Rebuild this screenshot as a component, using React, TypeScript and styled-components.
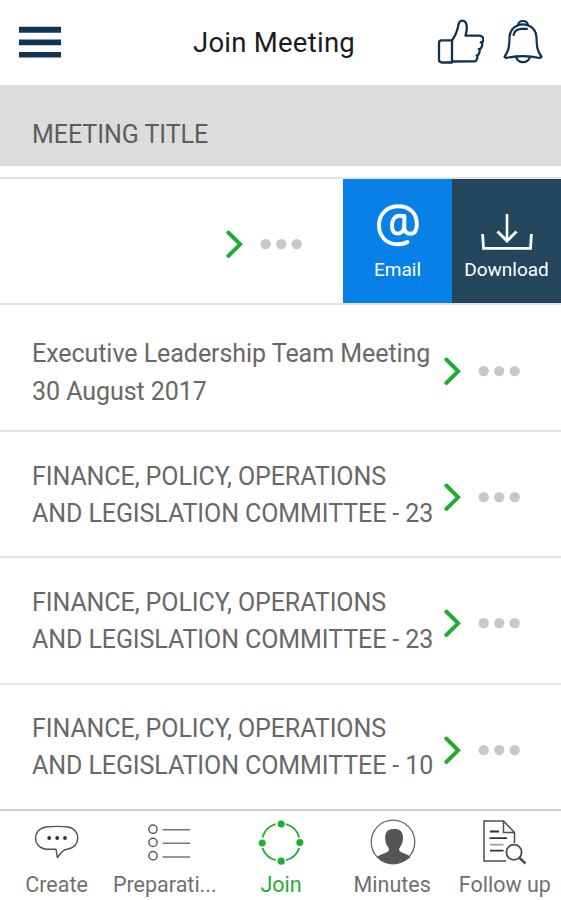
import React from "react";
import styled, { createGlobalStyle } from "styled-components";

const Global = createGlobalStyle`
  * { box-sizing: border-box; }
  html, body { margin: 0; padding: 0; background: #fff; }
  body { font-family: Roboto, "Liberation Sans", sans-serif; overflow: hidden; }
  svg { display: block; flex: none; }
`;

const Screen = styled.main`
  width: 561px;
  height: 900px;
  display: flex;
  flex-direction: column;
  background: #fff;
  overflow: hidden;
`;

const Header = styled.header`
  height: 85px;
  flex: none;
  display: grid;
  grid-template-columns: 117px 1fr 131px;
  align-items: center;
  padding: 0 18px 2px 19px;
`;

const Title = styled.h1`
  margin: 0;
  text-align: center;
  font-size: 27.5px;
  line-height: 32px;
  font-weight: 400;
  letter-spacing: 0.25px;
  color: #1c1c1c;
  padding-top: 3px;
  white-space: nowrap;
`;

const HeaderActions = styled.div`
  display: flex;
  justify-content: flex-end;
  gap: 19px;
`;

const IconButton = styled.button`
  border: 0;
  padding: 0;
  background: none;
  color: #12304f;
`;

const SectionBar = styled.div`
  height: 81px;
  flex: none;
  display: flex;
  align-items: center;
  padding: 17px 32px 0;
  background: #dcdcdc;
  color: #5c5c5c;
  font-size: 25px;
  letter-spacing: -0.05px;
`;

const List = styled.ul`
  list-style: none;
  margin: 11px 0 0;
  padding: 0;
  height: 632px;
  flex: none;
  display: grid;
  grid-template-rows: repeat(5, 1fr);
`;

const Row = styled.li<{ $swiped?: boolean }>`
  display: flex;
  align-items: stretch;
  border-top: 2px solid #e3e3e3;
  padding-left: ${(p) => (p.$swiped ? 226 : 32)}px;
`;

const RowText = styled.div<{ $drop: number; $spacing: number }>`
  width: 412px;
  padding-top: ${(p) => p.$drop}px;
  font-size: 25px;
  line-height: 37.2px;
  font-weight: 400;
  letter-spacing: ${(p) => p.$spacing}px;
  color: #686868;
  white-space: nowrap;
`;

const RowControls = styled.div`
  display: flex;
  align-items: center;
  gap: 15.500px;
  padding-top: 6px;
`;

const SwipeActions = styled.div`
  display: flex;
  margin-left: auto;
`;

const SwipeButton = styled.button<{ $bg: string }>`
  width: 109px;
  border: 0;
  padding: 22px 0 0;
  display: flex;
  flex-direction: column;
  align-items: center;
  gap: 5px;
  background: ${(p) => p.$bg};
  color: #fff;
  font-family: inherit;
  font-size: 19px;
  line-height: 24px;
`;

const TabBar = styled.nav`
  flex: 1;
  display: grid;
  grid-template-columns: repeat(5, 1fr);
  border-top: 2px solid #cfcfcf;
`;

const Tab = styled.button<{ $active?: boolean }>`
  border: 0;
  padding: 6px 0 0 1px;
  background: none;
  display: flex;
  flex-direction: column;
  align-items: center;
  gap: 5px;
  min-width: 0;
  font-family: inherit;
  font-size: 21.5px;
  line-height: 26px;
  white-space: nowrap;
  color: ${(p) => (p.$active ? "#1fae35" : "#707070")};
`;

const TabLabel = styled.span<{ $shift?: number }>`
  margin-right: ${(p) => p.$shift ?? 0}px;
`;

const MenuIcon = () => (
  <svg width="42" height="32" viewBox="0 0 42 32" fill="#123453">
    <path d="M0 .7h42v6H0zM0 13.500h42v5.700H0zM0 25.900h42v5.700H0z" />
  </svg>
);

const ThumbIcon = () => (
  <svg width="47" height="46" viewBox="0 0 47 46" fill="none" stroke="currentColor" strokeWidth="2.300" strokeLinejoin="round" strokeLinecap="round">
    <path d="M4.500 21.300H15V43.500H5Q2 43.500 2 40.500V24Q2 21.300 4.500 21.300Z" />
    <path d="M15 21.300c3-3.800 4.800-8.300 6-13.300.5-3.500 1.300-6.300 4-6.300 3.200 0 4.800 3 4.800 7 0 3-.6 5.500-1.300 8H42c3.700 0 5 2.500 4 6l-2.200.6 1.300.7c.3 2.300-.2 4-1.300 5.500l-2 .5 1 .8c0 2.200-.5 3.800-1.600 5.200l-1.600.5.9.8c-.3 3.500-1 5-3.200 5L15 42.500" />
  </svg>
);

const BellIcon = () => (
  <svg width="40" height="46" viewBox="0 0 40 46" fill="none" stroke="currentColor" strokeWidth="2.200" strokeLinejoin="round" strokeLinecap="round">
    <path d="M15 6.200c.8-5.600 9.200-5.600 10 0 5.700 2 8.100 6 8.500 12 .2 9.800 1 14.500 5 19.600L36.800 39C26 36.600 14 36.600 3.200 39L1.500 37.800c4-5.100 4.800-9.800 5-19.600.4-6 2.800-10 8.500-12Z" />
    <path d="M15 6.200q5-1.700 10 0M10.500 16c.8-3.500 3.600-5.800 7.500-6.200h6M13 37.800c2.500 7.200 11.500 7.200 14 0" />
  </svg>
);

const Chevron = () => (
  <svg width="18" height="30" viewBox="1 0 18 30" fill="none" stroke="#1cad35" strokeWidth="3.900">
    <path d="M3.300 3.500 15.200 15.300 3.300 27" strokeLinecap="round" />
  </svg>
);

const Dots = () => (
  <svg width="42" height="12" viewBox="0 0 42 12" fill="#c8c8c8">
    <circle cx="5.700" cy="6.100" r="5.200" />
    <circle cx="21.200" cy="6.100" r="5.200" />
    <circle cx="36.700" cy="6.100" r="5.200" />
  </svg>
);

const AtIcon = () => (
  <svg width="44" height="52" viewBox="0 0 44 52" fill="none" stroke="currentColor" strokeWidth="3.900" strokeLinecap="round" strokeLinejoin="round">
    <path d="M31.500 41c-2.800 1.700-5.800 2.300-9.500 2.300C10.500 43.300 3 35.500 3 24.300S11 5.300 22.300 5.300c11.300 0 18.500 7 18.500 17.500 0 6.300-2.300 10-6.200 10-3.900 0-6.300-2.300-6.300-6.500V14.800" />
    <path d="M28.300 15.800c-1.500-.8-3-1-4.500-1-5 0-7.800 4-7.800 9.500 0 5 1.900 8.300 5.500 8.300 4.100 0 6.800-3.500 6.800-8" />
  </svg>
);

const DownloadIcon = () => (
  <svg width="52" height="52" viewBox="0 0 52 52" fill="none" stroke="currentColor" strokeWidth="2.600">
    <path d="M1.600 33 2.500 47.300h47L50.400 33" strokeWidth="2.800" />
    <path d="M26 13v26" />
    <path d="M16.500 30.500 26 40l9.500-9.500" strokeWidth="3" />
  </svg>
);

const CreateIcon = () => (
  <svg width="46" height="50" viewBox="0 0 46 50" fill="none" stroke="#505050" strokeWidth="1.400" strokeLinejoin="round">
    <path d="M12 10q11-1.200 22 0c13 2 13 20 0 22-3 .4-4 1-5.500 2.200L23.300 40.500 22 32.200H12C-2 30.500-2 12 12 10Z" />
    <g fill="#333" stroke="none">
      <circle cx="15.200" cy="21" r="1.900" />
      <circle cx="23.200" cy="21" r="1.900" />
      <circle cx="31" cy="21" r="1.900" />
    </g>
  </svg>
);

const PreparationIcon = () => (
  <svg width="42" height="50" viewBox="0 0 42 50" fill="none" stroke="#5c5c5c" strokeWidth="1.500">
    <circle cx="5" cy="12.200" r="4.100" />
    <circle cx="5" cy="25.400" r="4.100" />
    <circle cx="5" cy="38.700" r="4.100" />
    <path d="M14.500 12.700H42M14.500 26.300H42M14.500 40H42" stroke="#777" strokeWidth="1.600" />
  </svg>
);

const JoinIcon = () => (
  <svg width="46" height="50" viewBox="0 0 46 50" fill="none" stroke="#1fae35" strokeWidth="1.900">
    <path d="M28 7.200A19 19 0 0 1 41.200 20.500M41.200 31A19 19 0 0 1 28 43.200M17.700 43.200A19 19 0 0 1 4.500 31M4.500 20.500A19 19 0 0 1 17.700 7.200" />
    <g fill="#1fae35" stroke="none">
      <circle cx="23.200" cy="7" r="3.600" />
      <circle cx="41.800" cy="25.500" r="3.500" />
      <circle cx="23.200" cy="44.200" r="3.600" />
      <circle cx="4.200" cy="26" r="3.500" />
    </g>
  </svg>
);

const MinutesIcon = () => (
  <svg width="46" height="50" viewBox="0 0 46 50">
    <circle cx="23" cy="25" r="21.800" fill="none" stroke="#666" strokeWidth="1.300" />
    <path fill="#565656" d="M7 40c4-3 8.500-3.500 11.200-5.700 1.100-1 .9-2.800-.3-4.600-2-2.500-2.700-5.200-2.700-9.200C15.200 14.500 18 12 24 12s9 2.500 9 8.500c0 4-.9 6.900-2.900 9.400-1.200 1.700-1.300 3.400-.1 4.400 2.500 2.200 7.500 2.700 10.500 5.700C31 49 15 49 7 40Z" />
  </svg>
);

const FollowUpIcon = () => (
  <svg width="44" height="50" viewBox="0.500 0 44 50" fill="none" stroke="#4d4d4d" strokeWidth="1.500">
    <path d="M23.500 44H1.500V4H21l11 11.500V26M21 4v11.500h11" />
    <path d="M7.500 14.500h9M7 21.200h17.500M7.500 33.700H21" stroke="#333" strokeWidth="1.800" />
    <path d="M7.500 27.700H21" stroke="#a0a0a0" strokeWidth="1.800" />
    <circle cx="31.500" cy="35.300" r="7.600" fill="#fff" strokeWidth="1.800" />
    <path d="m36.500 40.500 6.500 6" strokeWidth="2.400" />
  </svg>
);

type Meeting = { lines: string[]; drop: number; spacing: number };

const meetings: Meeting[] = [
  { lines: ["Executive Leadership Team Meeting", "30 August 2017"], drop: 30, spacing: -0.05 },
  { lines: ["FINANCE, POLICY, OPERATIONS", "AND LEGISLATION COMMITTEE - 23"], drop: 26, spacing: -0.09 },
  { lines: ["FINANCE, POLICY, OPERATIONS", "AND LEGISLATION COMMITTEE - 23"], drop: 26, spacing: -0.09 },
  { lines: ["FINANCE, POLICY, OPERATIONS", "AND LEGISLATION COMMITTEE - 10"], drop: 25.5, spacing: -0.09 },
];

const tabs = [
  { label: "Create", Icon: CreateIcon },
  { label: "Preparati...", Icon: PreparationIcon, shift: 8 },
  { label: "Join", Icon: JoinIcon, active: true },
  { label: "Minutes", Icon: MinutesIcon, shift: 2 },
  { label: "Follow up", Icon: FollowUpIcon, shift: 1 },
];

export default function App() {
  return (
    <Screen>
      <Global />
      <Header>
        <IconButton aria-label="Menu"><MenuIcon /></IconButton>
        <Title>Join Meeting</Title>
        <HeaderActions>
          <IconButton aria-label="Like"><ThumbIcon /></IconButton>
          <IconButton aria-label="Notifications"><BellIcon /></IconButton>
        </HeaderActions>
      </Header>
      <SectionBar>MEETING TITLE</SectionBar>
      <List>
        <Row $swiped>
          <RowControls><Chevron /><Dots /></RowControls>
          <SwipeActions>
            <SwipeButton $bg="#0780e8"><AtIcon />Email</SwipeButton>
            <SwipeButton $bg="#24465c"><DownloadIcon />Download</SwipeButton>
          </SwipeActions>
        </Row>
        {meetings.map((m, i) => (
          <Row key={i}>
            <RowText $drop={m.drop} $spacing={m.spacing}>
              {m.lines.map((line) => <div key={line}>{line}</div>)}
            </RowText>
            <RowControls><Chevron /><Dots /></RowControls>
          </Row>
        ))}
      </List>
      <TabBar>
        {tabs.map(({ label, Icon, active, shift }) => (
          <Tab key={label} $active={active}><Icon /><TabLabel $shift={shift}>{label}</TabLabel></Tab>
        ))}
      </TabBar>
    </Screen>
  );
}
